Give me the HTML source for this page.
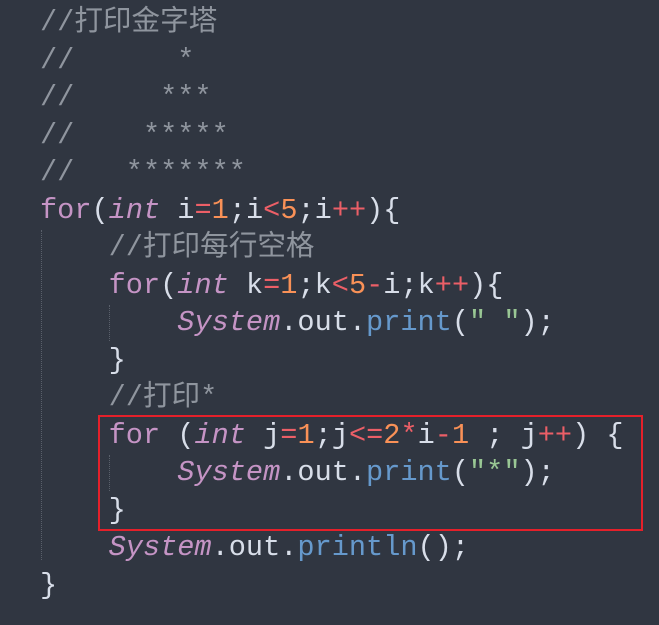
<!DOCTYPE html>
<html><head><meta charset="utf-8"><style>
html,body{margin:0;padding:0;}
body{width:659px;height:625px;background:#303641;overflow:hidden;position:relative;
font-family:"Liberation Mono","Noto Sans CJK SC",monospace;font-size:28.6px;color:#d8dee9;}
.l{position:absolute;left:40px;height:37.5px;line-height:37.5px;white-space:pre;}
.c{color:#8f959e}.k{color:#c594c5}.i{color:#c594c5;font-style:italic}.n{color:#f99157}
.o{color:#ec5f67}.f{color:#6699cc}.s{color:#99c794}
.g{position:absolute;border-left:1px dotted #5a606b;width:0}
.box{position:absolute;left:98px;top:415px;width:541px;height:112px;border:2.5px solid #e5202a;}
</style></head><body>
<div class="g" style="left:41px;top:230px;height:330px"></div>
<div class="g" style="left:109px;top:305px;height:36px"></div>
<div class="g" style="left:109px;top:455px;height:36px"></div>
<div class="l c" style="top:4px">//打印金字塔</div>
<div class="l c" style="top:41.5px">//      *</div>
<div class="l c" style="top:79px">//     ***</div>
<div class="l c" style="top:116.5px">//    *****</div>
<div class="l c" style="top:154px">//   *******</div>
<div class="l" style="top:191.5px"><span class="k">for</span>(<span class="i">int</span> i<span class="o">=</span><span class="n">1</span>;i<span class="o">&lt;</span><span class="n">5</span>;i<span class="o">++</span>){</div>
<div class="l c" style="top:229px">    //打印每行空格</div>
<div class="l" style="top:266.5px">    <span class="k">for</span>(<span class="i">int</span> k<span class="o">=</span><span class="n">1</span>;k<span class="o">&lt;</span><span class="n">5</span><span class="o">-</span>i;k<span class="o">++</span>){</div>
<div class="l" style="top:304px">        <span class="i">System</span>.out.<span class="f">print</span>(<span class="s">" "</span>);</div>
<div class="l" style="top:341.5px">    }</div>
<div class="l c" style="top:379px">    //打印*</div>
<div class="l" style="top:416.5px">    <span class="k">for</span> (<span class="i">int</span> j<span class="o">=</span><span class="n">1</span>;j<span class="o">&lt;=</span><span class="n">2</span><span class="o">*</span>i<span class="o">-</span><span class="n">1</span> ; j<span class="o">++</span>) {</div>
<div class="l" style="top:454px">        <span class="i">System</span>.out.<span class="f">print</span>(<span class="s">"*"</span>);</div>
<div class="l" style="top:491.5px">    }</div>
<div class="l" style="top:529px">    <span class="i">System</span>.out.<span class="f">println</span>();</div>
<div class="l" style="top:566.5px">}</div>
<div class="box"></div>
</body></html>
